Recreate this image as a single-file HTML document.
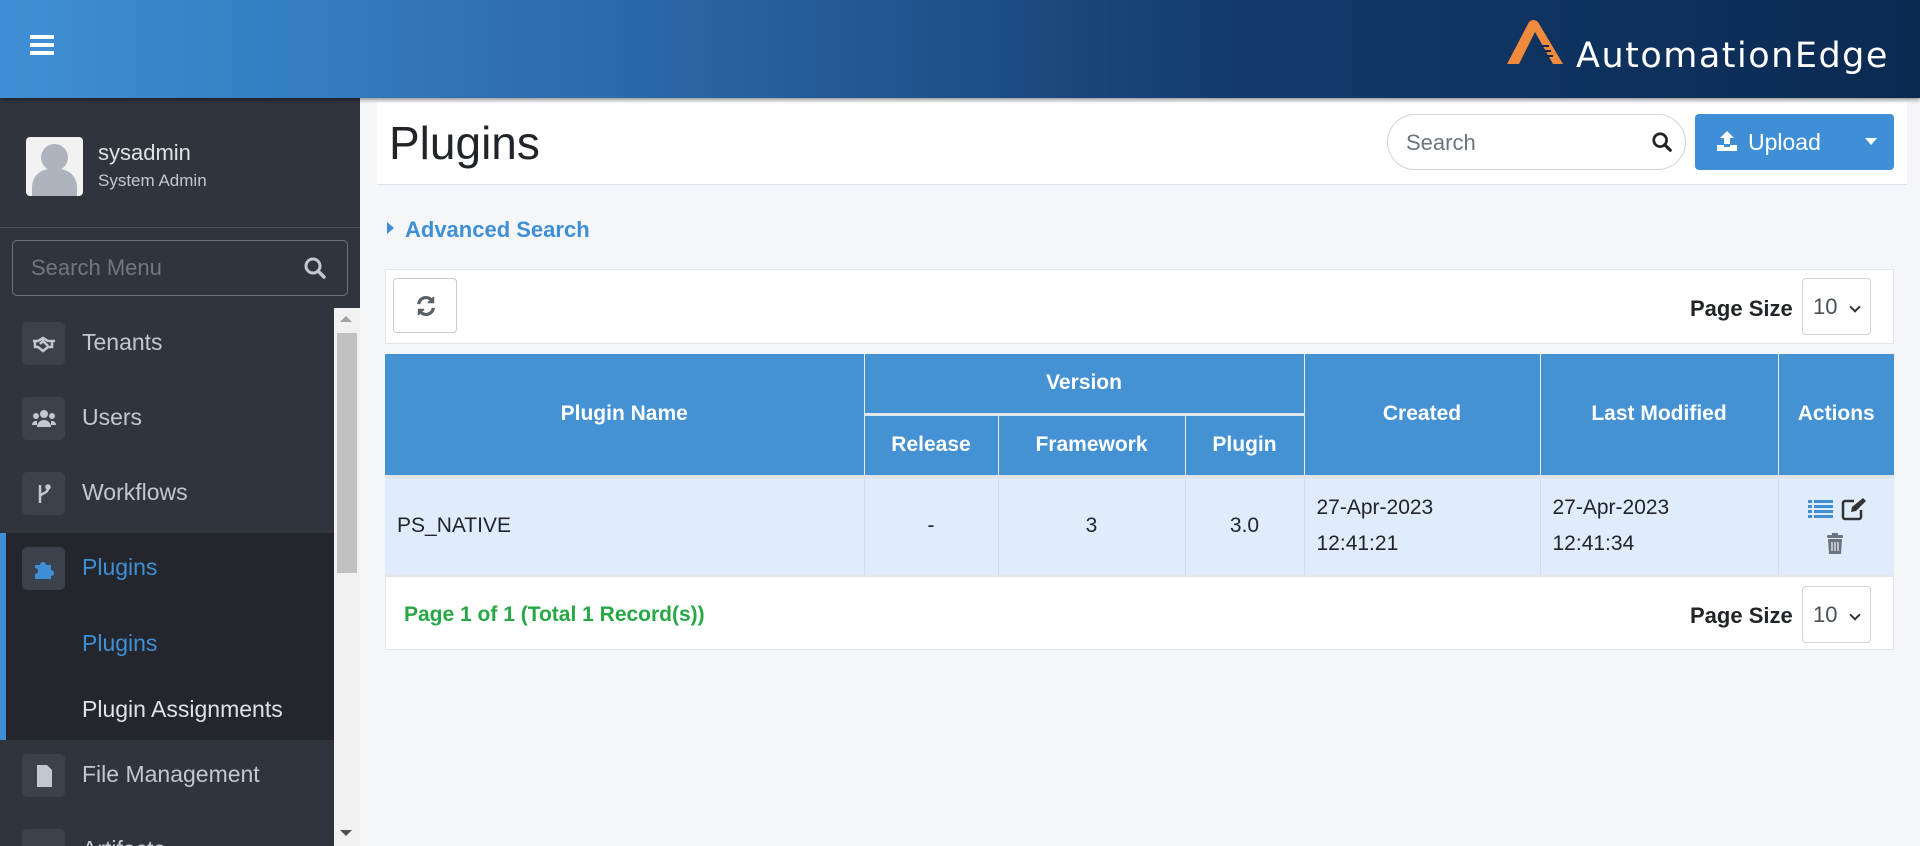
<!DOCTYPE html>
<html style="overflow:hidden;height:846px"><head><meta charset="utf-8"><style>
*{box-sizing:border-box;margin:0;padding:0}
body{width:1920px;height:846px;overflow:hidden;background:#f4f6f9;font-family:"Liberation Sans",sans-serif;position:relative;color:#212529}
.a{position:absolute}
#hdr{left:0;top:0;width:1920px;height:98px;background:linear-gradient(90deg,#3f8fd6 0%,#2a66a6 35%,#123a6b 65%,#0b2a52 100%);box-shadow:0 2px 4px rgba(0,0,0,.4);z-index:5}
#side{left:0;top:98px;width:360px;height:748px;background:#30343d;overflow:hidden}
.mi{position:absolute;left:0;width:334px;height:75px;color:#c2c7d0;font-size:23px}
.mi .ic{position:absolute;left:22px;top:16px;width:43px;height:43px;background:#3c414b;border-radius:5px}
.mi .ic svg{position:absolute;left:10px;top:10px}
.mi span{position:absolute;left:82px;top:23px}
th,td{font-size:21px}
</style></head><body>
<div id="hdr" class="a">
 <div class="a" style="left:30px;top:35px;width:24px;height:4px;background:#fff;box-shadow:0 8px 0 #fff,0 16px 0 #fff"></div>
 <svg class="a" style="left:1505px;top:18px" width="70" height="50" viewBox="0 0 70 50"><path d="M2 46 L24 4 Q28 0 33 4 L58 46 L48 46 L30 14 L14 46Z" fill="#f08a3c"/><path d="M36 28h8M38 33h8M40 38h8" stroke="#0b2a52" stroke-width="2"/></svg>
 <div class="a" style="left:1576px;top:36px;color:#fff;font-size:35px;letter-spacing:1.5px;font-family:'DejaVu Sans',sans-serif">AutomationEdge</div>
</div>
<div id="side" class="a">
 <div class="a" style="left:26px;top:39px;width:57px;height:59px;background:#f2f2f2;border-radius:4px;overflow:hidden"><div class="a" style="left:15px;top:7px;width:27px;height:27px;border-radius:50%;background:#adb4bd"></div><div class="a" style="left:6px;top:32px;width:45px;height:30px;border-radius:18px 18px 0 0;background:#adb4bd"></div></div>
 <div class="a" style="left:98px;top:42px;color:#dfe2e6;font-size:22px">sysadmin</div>
 <div class="a" style="left:98px;top:73px;color:#c2c7d0;font-size:17px">System Admin</div>
 <div class="a" style="left:0;top:129px;width:360px;height:1px;background:#4b515c"></div>
 <div class="a" style="left:12px;top:142px;width:336px;height:56px;border:1px solid #6c737d;border-radius:5px"><span class="a" style="left:18px;top:14px;color:#6f7782;font-size:22px">Search Menu</span>
 <svg class="a" style="left:290px;top:15px" width="24" height="24" viewBox="0 0 24 24"><circle cx="10" cy="10" r="7" stroke="#c2c7d0" stroke-width="3" fill="none"/><path d="M15 15l6 6" stroke="#c2c7d0" stroke-width="3.5" stroke-linecap="round"/></svg></div>
 <div class="mi" style="top:208px"><div class="ic"><svg width="24" height="24" viewBox="0 0 24 24" fill="none" stroke="#c2c7d0" stroke-width="2.5"><path d="M1 9h5l5 -3 5 3h7M3 9v6h3l5 4 5-4h4V9"/><path d="M8 12l3-3 5 5"/></svg></div><span>Tenants</span></div>
 <div class="mi" style="top:283px"><div class="ic"><svg width="24" height="24" viewBox="0 0 24 24" fill="#c2c7d0"><circle cx="12" cy="7" r="4"/><circle cx="4" cy="9" r="3"/><circle cx="20" cy="9" r="3"/><path d="M5 20a7 7 0 0 1 14 0zM0 18a4 4 0 0 1 5-4v4zM24 18a4 4 0 0 0-5-4v4z"/></svg></div><span>Users</span></div>
 <div class="mi" style="top:358px"><div class="ic"><svg width="24" height="24" viewBox="0 0 24 24" fill="none" stroke="#c2c7d0" stroke-width="2.5"><path d="M8 3v18M8 15c0-4 8-3 8-9"/><circle cx="16" cy="5" r="1.5"/></svg></div><span>Workflows</span></div>
 <div class="a" style="left:0;top:435px;width:334px;height:207px;background:#23262c;border-left:6px solid #3f8fd6"></div>
 <div class="mi" style="top:433px;color:#3f8fd6"><div class="ic"><svg width="24" height="24" viewBox="0 0 24 24" fill="#3f8fd6"><path d="M3 8h5a3 3 0 1 1 6 0h5v5a3 3 0 1 1 0 6v3H3v-5a3 3 0 1 0 0-6z"/></svg></div><span>Plugins</span></div>
 <div class="a" style="left:82px;top:532px;color:#3f8fd6;font-size:23px">Plugins</div>
 <div class="a" style="left:82px;top:598px;color:#dfe2e6;font-size:23px">Plugin Assignments</div>
 <div class="mi" style="top:640px"><div class="ic"><svg width="24" height="24" viewBox="0 0 24 24" fill="#c2c7d0"><path d="M5 1h10l5 5v17H5z"/></svg></div><span>File Management</span></div>
 <div class="mi" style="top:715px"><div class="ic"></div><span>Artifacts</span></div>
 <div class="a" style="left:334px;top:210px;width:26px;height:538px;background:#f1f1f1"></div>
 <div class="a" style="left:340px;top:218px;border:6px solid transparent;border-bottom:6px solid #a3a3a3;border-top:0"></div>
 <div class="a" style="left:337px;top:235px;width:20px;height:240px;background:#c1c1c1"></div>
 <div class="a" style="left:340px;top:732px;border:6px solid transparent;border-top:6px solid #505050;border-bottom:0"></div>
</div>
<div class="a" style="left:377px;top:102px;width:1530px;height:83px;background:#fff;border-bottom:1px solid #dee2e6"></div>
<div class="a" style="left:389px;top:116px;font-size:46px;color:#212529">Plugins</div>
<div class="a" style="left:1387px;top:114px;width:299px;height:56px;background:#fff;border:1px solid #ced4da;border-radius:28px"><span class="a" style="left:18px;top:15px;color:#6c757d;font-size:22px">Search</span>
<svg class="a" style="left:263px;top:16px" width="22" height="22" viewBox="0 0 24 24"><circle cx="10" cy="10" r="7" stroke="#212529" stroke-width="3" fill="none"/><path d="M15 15l6 6" stroke="#212529" stroke-width="3.5" stroke-linecap="round"/></svg></div>
<div class="a" style="left:1695px;top:114px;width:199px;height:56px;background:#3f8fd6;border-radius:4px;color:#fff">
 <svg class="a" style="left:20px;top:16px" width="24" height="22" viewBox="0 0 24 22"><path d="M12 1l7 7h-4v6h-6v-6h-4z M2 15h7v2h6v-2h7v6h-20z" fill="#fff"/></svg>
 <span class="a" style="left:53px;top:15px;font-size:23px">Upload</span>
 <span class="a" style="left:170px;top:24px;border:6px solid transparent;border-top:7px solid #fff"></span></div>
<div class="a" style="left:387px;top:222px;border:6px solid transparent;border-left:7px solid #3f8fd6;border-right:0"></div>
<div class="a" style="left:405px;top:217px;color:#3f8fd6;font-weight:bold;font-size:22px">Advanced Search</div>
<div class="a" style="left:385px;top:269px;width:1509px;height:75px;background:#fff;border:1px solid #e3e6ea"></div>
<div class="a" style="left:393px;top:278px;width:64px;height:55px;border:1px solid #ccc;border-radius:4px;background:#fff">
<svg class="a" style="left:21px;top:16px" width="22" height="22" viewBox="0 0 24 24" fill="none" stroke="#5a6068" stroke-width="3.5"><path d="M4 10a8 8 0 0 1 15-3"/><path d="M20 14a8 8 0 0 1-15 3"/><path d="M20 2v6h-6M4 22v-6h6" fill="#5a6068" stroke-width="2"/></svg></div>
<div class="a" style="left:1690px;top:296px;font-weight:bold;font-size:22px">Page Size</div>
<div class="a" style="left:1802px;top:278px;width:69px;height:57px;border:1px solid #ced4da;border-radius:4px;background:#fff;font-size:22px;padding:15px 10px;color:#495057">10<span class="a" style="left:48px;top:24px;width:8px;height:8px;border-right:2px solid #333;border-bottom:2px solid #333;transform:rotate(45deg)"></span></div>
<table class="a" style="left:385px;top:354px;width:1509px;border-collapse:collapse;text-align:center">
<tr style="background:#4491d4;color:#fff;height:60px"><th rowspan="2" style="width:479px;border-right:1px solid #eee">Plugin Name</th><th colspan="3" style="border-right:1px solid #eee;border-bottom:3px solid #dfe6ee">Version</th><th rowspan="2" style="width:236px;border-right:1px solid #eee">Created</th><th rowspan="2" style="width:238px;border-right:1px solid #eee">Last Modified</th><th rowspan="2">Actions</th></tr>
<tr style="background:#4491d4;color:#fff;height:62px"><th style="width:134px;border-right:1px solid #eee">Release</th><th style="width:187px;border-right:1px solid #eee">Framework</th><th style="width:119px;border-right:1px solid #eee">Plugin</th></tr>
<tr style="background:#e0ecfc;height:99px;border-top:3px solid #dfe3e8"><td style="text-align:left;padding-left:12px;border-right:1px solid #d6dde6">PS_NATIVE</td><td style="border-right:1px solid #d6dde6">-</td><td style="border-right:1px solid #d6dde6">3</td><td style="border-right:1px solid #d6dde6">3.0</td><td style="text-align:left;padding-left:12px;line-height:36px;border-right:1px solid #d6dde6">27-Apr-2023<br>12:41:21</td><td style="text-align:left;padding-left:12px;line-height:36px;border-right:1px solid #d6dde6">27-Apr-2023<br>12:41:34</td>
<td><div style="position:relative;height:70px">
<svg class="a" style="left:29px;top:8px" width="25" height="20" viewBox="0 0 25 20" fill="#3f8fd6"><rect x="0" y="1" width="4" height="3"/><rect x="6" y="1" width="19" height="3"/><rect x="0" y="6" width="4" height="3"/><rect x="6" y="6" width="19" height="3"/><rect x="0" y="11" width="4" height="3"/><rect x="6" y="11" width="19" height="3"/><rect x="0" y="16" width="4" height="3"/><rect x="6" y="16" width="19" height="3"/></svg>
<svg class="a" style="left:62px;top:6px" width="26" height="24" viewBox="0 0 26 24"><path d="M13 4H4a2 2 0 0 0-2 2v14a2 2 0 0 0 2 2h14a2 2 0 0 0 2-2v-7" fill="none" stroke="#333" stroke-width="2.5"/><path d="M10 15l1-5 11-9 3 3-10 10z" fill="#333"/></svg>
<svg class="a" style="left:47px;top:42px" width="18" height="22" viewBox="0 0 18 22" fill="#6c757d"><rect x="1" y="2" width="16" height="3" rx="1"/><rect x="6" y="0" width="6" height="3"/><path d="M2 6h14l-1 15H3z"/><path d="M6 9v9M9 9v9M12 9v9" stroke="#e0ecfc" stroke-width="1.3"/></svg>
</div></td></tr>
</table>
<div class="a" style="left:385px;top:575px;width:1509px;height:75px;background:#fff;border:1px solid #e3e6ea;border-top:2px solid #e3e6ea"></div>
<div class="a" style="left:404px;top:603px;color:#28a745;font-weight:bold;font-size:21px">Page 1 of 1 (Total 1 Record(s))</div>
<div class="a" style="left:1690px;top:603px;font-weight:bold;font-size:22px">Page Size</div>
<div class="a" style="left:1802px;top:586px;width:69px;height:57px;border:1px solid #ced4da;border-radius:4px;background:#fff;font-size:22px;padding:15px 10px;color:#495057">10<span class="a" style="left:48px;top:24px;width:8px;height:8px;border-right:2px solid #333;border-bottom:2px solid #333;transform:rotate(45deg)"></span></div>
</body></html>
